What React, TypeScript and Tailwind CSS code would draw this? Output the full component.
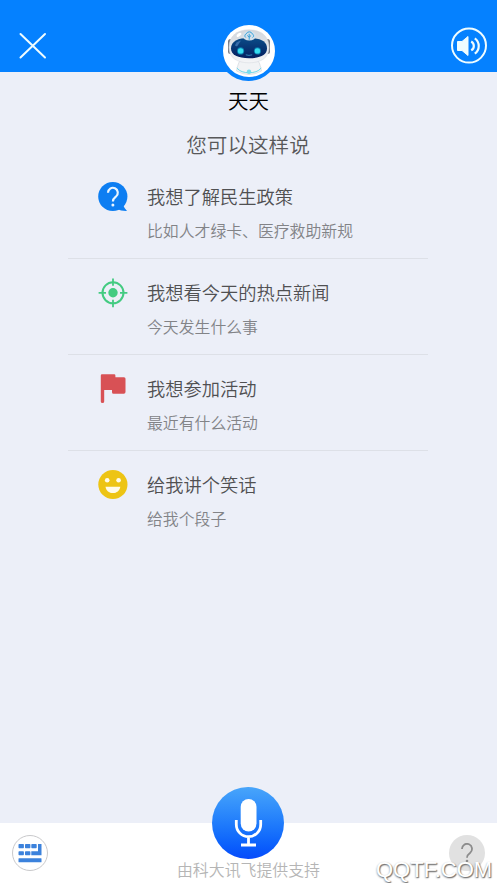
import React from 'react';

const Question = () => (
  <svg width="32" height="32" viewBox="0 0 32 32">
    <circle cx="15.8" cy="15.5" r="14.6" fill="#0d7ef2" />
    <path d="M25.5 23 Q27.5 27.5 30 30 Q24 30.2 20 28Z" fill="#0d7ef2" />
    <path d="M11 11.8a4.9 4.9 0 1 1 8 3.7c-1.9 1.5-3.1 2.2-3.1 5" fill="none" stroke="#e9f5ff" strokeWidth="2.2" />
    <circle cx="15.9" cy="24" r="1.5" fill="#e9f5ff" />
  </svg>
);

const Target = () => (
  <svg width="32" height="32" viewBox="0 0 32 32" fill="none" stroke="#43cb81">
    <circle cx="16" cy="15.8" r="10.5" strokeWidth="2" />
    <circle cx="16" cy="15.8" r="4.7" fill="#43cb81" stroke="none" />
    <path d="M16 1.4v7.4M16 22.8v7.4M1.6 15.8H9M23 15.8h7.4" strokeWidth="1.8" />
  </svg>
);

const Flag = () => (
  <svg width="32" height="32" viewBox="0 0 32 32" fill="#d85155">
    <path d="M5 1.2h12.200q1.200 0 1.200 1.200v1.800H27q1.500 0 1.500 1.500V19q0 1.700-1.700 1.700H16.500q-1.500 0-1.500-1.500V17H7.200v11.500q0 1.500-1.700 1.500T3.800 28.500V2.400Q3.800 1.200 5 1.200Z" />
  </svg>
);

const Smile = () => (
  <svg width="32" height="32" viewBox="0 0 32 32">
    <circle cx="15.900" cy="15.500" r="14.600" fill="#edc414" />
    <circle cx="10.200" cy="11.300" r="2.300" fill="#fffbea" />
    <circle cx="21.600" cy="11.300" r="2.300" fill="#fffbea" />
    <path d="M8.500 17.800h14.800c-.7 4-3.500 6.300-7.400 6.300s-6.700-2.300-7.400-6.300Z" fill="#fffbea" />
  </svg>
);

const Robot = () => (
  <svg width="52" height="52" viewBox="0 0 52 52">
    <defs>
      <linearGradient id="visor" x1="0" y1="0" x2="0" y2="1">
        <stop offset="0" stopColor="#0a4c88" />
        <stop offset="1" stopColor="#051f60" />
      </linearGradient>
      <linearGradient id="shell" x1="0" y1="0" x2="0" y2="1">
        <stop offset="0" stopColor="#d2d6dc" />
        <stop offset="1" stopColor="#f4f5f7" />
      </linearGradient>
    </defs>
    <path d="M17 36c-2 2-2.500 6-3.500 10Q26 53 38.500 46c-1-4-1.500-8-3.500-10Z" fill="#f1f3f5" stroke="#d4d9de" strokeWidth=".7" />
    <path d="M13.800 43c3 3.500 7 4.700 12.200 4.700S35.500 46.500 38.200 43" fill="none" stroke="#62d4e7" strokeWidth=".9" />
    <circle cx="26" cy="46.800" r="2.200" fill="#79dced" />
    <rect x="5" y="14" width="5" height="15" rx="2.500" fill="#777b85" />
    <rect x="42" y="14" width="5" height="15" rx="2.500" fill="#777b85" />
    <path d="M26 4.800C14 4.800 6 11 6 22.500 6 33.500 15 37.800 26 37.800s20-4.300 20-15.300C46 11 38 4.800 26 4.800Z" fill="url(#shell)" stroke="#d5d8de" strokeWidth=".5" />
    <path d="M26 13c-11 0-18 3-18 10.500C8 30 15 33.200 26 33.200S44 30 44 23.500C44 16 37 13 26 13Z" fill="url(#visor)" />
    <ellipse cx="26.300" cy="10.800" rx="6.700" ry="4.800" fill="#d4e0eb" />
    <path d="M22.800 12.500a2 2 0 0 1 .5-3.600 3.200 3.200 0 0 1 6 0 2 2 0 0 1 .3 3.600M26.200 8.800v6M24.300 10.500l1.900 1.700 1.900-1.700" fill="none" stroke="#35a0d9" strokeWidth="1" />
    <path d="M12 20.500q1-4 6-5l-4 6Z" fill="#386daa" />
    <circle cx="17.600" cy="25.900" r="3.600" fill="#087cae" />
    <circle cx="34.400" cy="25.900" r="3.600" fill="#087cae" />
    <circle cx="17.600" cy="25.900" r="2.700" fill="#37ddef" />
    <circle cx="34.400" cy="25.900" r="2.700" fill="#37ddef" />
    <path d="M22.800 29.800q3.200 1.200 6.400 0" fill="none" stroke="#368fc1" strokeWidth=".9" />
    <ellipse cx="16" cy="9.800" rx="2.800" ry="1.500" transform="rotate(-35 16 9.800)" fill="#fff" />
  </svg>
);

const items = [
  { icon: <Question />, title: '我想了解民生政策', sub: '比如人才绿卡、医疗救助新规' },
  { icon: <Target />, title: '我想看今天的热点新闻', sub: '今天发生什么事' },
  { icon: <Flag />, title: '我想参加活动', sub: '最近有什么活动' },
  { icon: <Smile />, title: '给我讲个笑话', sub: '给我个段子' },
];

export default function App() {
  return (
    <div className="relative flex h-[883px] w-[497px] flex-col overflow-hidden bg-[#eceff8] font-['Noto_Sans_CJK_SC',sans-serif] font-[350]">
      <header className="flex h-[72px] shrink-0 items-start justify-between bg-[#0581ff] pl-[19px] pr-[9px]">
        <svg className="mt-[32px]" width="28" height="28" viewBox="0 0 28 28" stroke="#effcff" strokeWidth="2" strokeLinecap="round">
          <path d="M1.500 2 26 25.500M26 2 1.500 25.500" />
        </svg>
        <svg className="mt-[27px]" width="38" height="38" viewBox="0 0 38 38" fill="none" stroke="#effcff">
          <circle cx="19" cy="18.600" r="17" strokeWidth="2" />
          <path d="M7.500 14.500h4.500l6-5v19l-6-5H7.500Z" fill="#effcff" strokeWidth="1" strokeLinejoin="round" />
          <path d="M21.200 14.500a5 5 0 0 1 0 8.800M24.800 11.300a9.500 9.500 0 0 1 0 15.400" strokeWidth="2.200" />
        </svg>
      </header>
      <div className="absolute left-[218px] top-[20px] flex size-[61px] items-center justify-center rounded-full bg-[#0581ff]">
        <div className="mt-[1px] size-[52px] overflow-hidden rounded-full bg-white"><Robot /></div>
      </div>

      <main className="flex-1">
        <h1 className="mt-[13px] text-center text-[20.500px] leading-[30px] text-black">天天</h1>
        <h2 className="mt-[14px] pr-px text-center text-[20.600px] leading-[30px] text-[#58585a]">您可以这样说</h2>
        <ul className="ml-[68px] mt-[4px] w-[360px]">
          {items.map((item, i) => (
            <li key={item.title} className={`flex h-[96px] pl-[29px] ${i < items.length - 1 ? 'border-b border-[#dde0e7]' : ''}`}>
              <div className="mt-[18px] w-[50px] shrink-0">{item.icon}</div>
              <div className="whitespace-nowrap pt-[19px]">
                <p className="text-[18.250px] leading-[28px] text-[#505052]">{item.title}</p>
                <p className="mt-[9px] text-[15.850px] leading-[24px] text-[#828387]">{item.sub}</p>
              </div>
            </li>
          ))}
        </ul>
      </main>

      <footer className="flex h-[60px] shrink-0 items-start justify-between bg-white pl-[12px] pr-[12px]">
        <div className="mt-[12px] flex size-[36px] items-center justify-center rounded-full border border-[#c9c9cb]">
          <svg width="24" height="20" viewBox="0 0 24 20" fill="#3c82dc">
            <rect x=".5" y="1" width="5.400" height="4.200" rx=".7" />
            <rect x="7" y="1" width="5.400" height="4.200" rx=".7" />
            <rect x="13.300" y="1" width="5.400" height="4.200" rx=".7" />
            <rect x=".5" y="8.300" width="5.400" height="4" rx=".7" />
            <rect x="7" y="8.300" width="5.400" height="4" rx=".7" />
            <path d="M20 1h3.500v11.300H13.300V8.300H20Z" />
            <rect x=".5" y="15.200" width="23" height="4" rx=".5" />
          </svg>
        </div>
        <p className="mt-[35px] text-[15.900px] leading-[24px] text-[#b5b5b5]">由科大讯飞提供支持</p>
        <div className="mt-[12px] flex size-[36px] items-center justify-center rounded-full bg-[#e1e1e1]">
          <svg width="14" height="20" viewBox="0 0 14 20">
            <path d="M2 6a5 5 0 1 1 8.200 3.700c-2.100 1.600-3.200 2.500-3.200 5" fill="none" stroke="#8c8c8c" strokeWidth="1.800" />
            <circle cx="7" cy="18" r="1.300" fill="#8c8c8c" />
          </svg>
        </div>
      </footer>
      <div className="absolute left-[212px] top-[787px] size-[72px] rounded-full bg-linear-to-b from-[#48a5fa] to-[#084afb]">
        <svg width="72" height="72" viewBox="0 0 72 72" fill="none" stroke="#fff">
          <rect x="28.700" y="12" width="15.800" height="32.500" rx="7.900" fill="#fff" stroke="none" />
          <path d="M24.300 33v4.500a12.200 12.200 0 0 0 24.400 0V33M36.500 50v8M29 58h15" strokeWidth="2.800" />
        </svg>
      </div>
      <div className="absolute left-[376px] top-[857px] font-['Liberation_Sans',sans-serif] text-[22px] leading-[26px] font-normal text-white [text-shadow:1px_1px_1px_#777,0_1px_2px_#888]">QQTF.COM</div>
    </div>
  );
}
